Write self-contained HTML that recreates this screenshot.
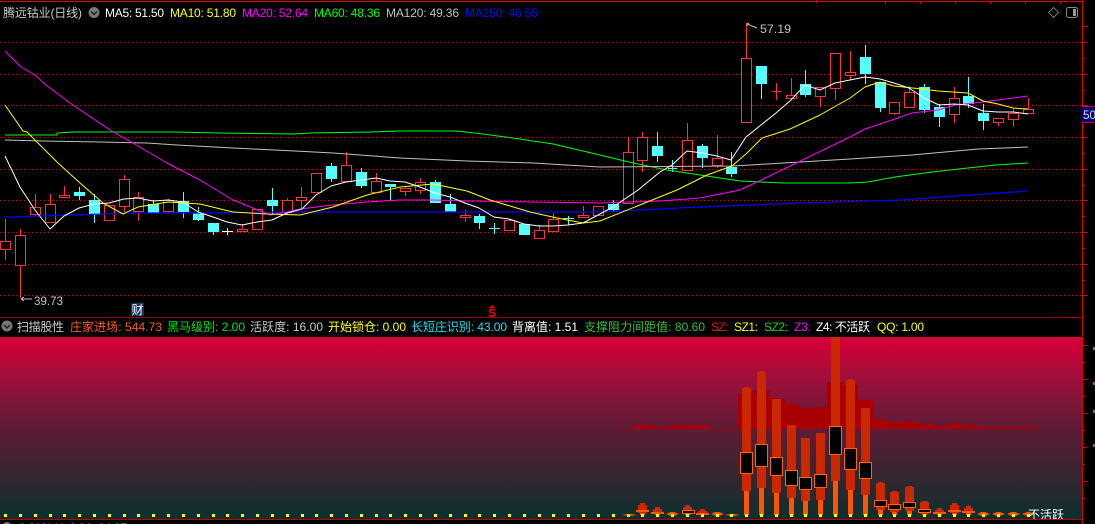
<!DOCTYPE html>
<html><head><meta charset="utf-8"><style>
html,body{margin:0;padding:0;background:#000;width:1095px;height:524px;overflow:hidden}
svg{display:block}
text{font-family:"Liberation Sans","WenQuanYi Zen Hei","Noto Sans CJK SC",sans-serif;font-size:12px}
</style></head><body>
<svg width="1095" height="524" viewBox="0 0 1095 524" xmlns="http://www.w3.org/2000/svg">
<defs><linearGradient id="g" x1="0" y1="0" x2="0" y2="1">
<stop offset="0" stop-color="#d90038"/><stop offset=".25" stop-color="#99103a"/><stop offset=".5" stop-color="#5e1c36"/><stop offset=".75" stop-color="#38252f"/><stop offset="1" stop-color="#0a3030"/></linearGradient></defs>
<rect width="1095" height="524" fill="#000"/>
<!-- grid -->
<path shape-rendering="crispEdges" d="M0 42.5H1082M0 74.5H1082M0 105.5H1082M0 137.5H1082M0 169.5H1082M0 200.5H1082M0 232.5H1082M0 264.5H1082M0 295.5H1082" stroke="#d80000" stroke-dasharray="1 3" fill="none"/>
<!-- frame -->
<path shape-rendering="crispEdges" d="M0 1.5H1082M1082.5 0V524" stroke="#d80000" fill="none"/>
<path shape-rendering="crispEdges" d="M17.5 0v2M816.5 0v3M885.5 2v2M920.5 2v2M955.5 2v2M990.5 2v2M1025.5 2v2M1060.5 2v2" stroke="#d80000" fill="none"/>
<path shape-rendering="crispEdges" d="M1082 26.5h6M1082 42.5h6M1082 58.5h3M1082 74.5h6M1082 90.5h3M1082 105.5h6M1082 137.5h6M1082 153.5h3M1082 169.5h6M1082 185.5h3M1082 200.5h6M1082 216.5h3M1082 232.5h6M1082 248.5h3M1082 264.5h6M1082 280.5h3M1082 295.5h6M1082 345.5h5M1082 362.5h3M1082 379.5h5M1082 396.5h3M1082 413.5h5M1082 430.5h3M1082 447.5h5M1082 464.5h3M1082 481.5h5M1082 498.5h3" stroke="#d80000" fill="none"/>
<path shape-rendering="crispEdges" d="M0 317.5H1082" stroke="#a00000" fill="none"/>
<!-- red wicks -->
<path shape-rendering="crispEdges" stroke="#ff3434" fill="none" d="M5.5 219V260M20.5 229V298M35.5 194V216M50.5 194V222M64.5 186V198M124.5 175V212M138.5 192V221M168.5 199V213M242.5 224V231M287.5 198V214M301.5 187V208M346.5 152V181M376.5 173V192M405.5 187V196M420.5 178V194M465.5 210V222M509.5 219V231M539.5 225V239M553.5 213V231M583.5 206V218M628.5 137V203M642.5 132V172M687.5 123V171M717.5 135V168M746.5 23V122M776.5 83V100M791.5 78V98M820.5 87V107M835.5 53V100M850.5 51V80M894.5 102V115M909.5 86V107M954.5 87V123M998.5 118V126M1013.5 108V127M1028.5 98V113"/>
<!-- red boxes -->
<path shape-rendering="crispEdges" stroke="#ff3434" fill="#000" d="M.5 241.5h10v8h-10zM15.5 235.5h10v30h-10zM30.5 207.5h10v7h-10zM45.5 204.5h10v18h-10zM59.5 195.5h10v2h-10zM104.5 205.5h10v15h-10zM119.5 179.5h10v27h-10zM133.5 197.5h10v14h-10zM163.5 200.5h10v11h-10zM237.5 229.5h10v2h-10zM252.5 209.5h10v20h-10zM282.5 200.5h10v12h-10zM296.5 197.5h10v3h-10zM311.5 173.5h10v19h-10zM341.5 165.5h10v16h-10zM371.5 181.5h10v11h-10zM400.5 188.5h10v3h-10zM415.5 182.5h10v8h-10zM460.5 215.5h10v2h-10zM504.5 220.5h10v10h-10zM534.5 230.5h10v8h-10zM548.5 219.5h10v12h-10zM578.5 215.5h10v2h-10zM593.5 206.5h10v9h-10zM623.5 152.5h10v51h-10zM637.5 137.5h10v23h-10zM682.5 140.5h10v30h-10zM712.5 158.5h10v7h-10zM741.5 58.5h10v64h-10zM771.5 91.5h10M786.5 95.5h10v3h-10zM815.5 87.5h10v9h-10zM830.5 53.5h10v35h-10zM845.5 72.5h10v3h-10zM889.5 102.5h10v11h-10zM904.5 92.5h10v15h-10zM949.5 98.5h10v16h-10zM993.5 118.5h10v4h-10zM1008.5 113.5h10v6h-10zM1023.5 109.5h10v4h-10z"/>
<!-- cyan wicks -->
<path shape-rendering="crispEdges" stroke="#54ffff" fill="none" d="M79.5 187V200M94.5 194V223M153.5 200V213M183.5 192V218M198.5 207V221M213.5 223V235M272.5 188V215M331.5 163V182M361.5 168V188M390.5 184V200M435.5 180V203M450.5 194V212M479.5 214V229M494.5 223V234M489 228.5h11M568.5 216V225M563 218.5h11M613.5 200V212M657.5 132V162M672.5 160V172M668 168.5h9M702.5 144V168M731.5 152V177M761.5 84V99M805.5 70V97M865.5 45V84M880.5 82V112M924.5 84V113M939.5 104V127M968.5 77V108M983.5 104V130"/>
<!-- cyan boxes -->
<path shape-rendering="crispEdges" fill="#54ffff" d="M74 192h11v4h-11zM89 200h11v15h-11zM148 204h11v9h-11zM178 201h11v11h-11zM193 213h11v7h-11zM208 223h11v9h-11zM267 200h11v6h-11zM326 166h11v13h-11zM356 172h11v14h-11zM385 184h11v3h-11zM430 182h11v21h-11zM445 204h11v8h-11zM474 216h11v7h-11zM519 224h11v11h-11zM608 204h11v6h-11zM652 146h11v10h-11zM697 146h11v12h-11zM726 167h11v7h-11zM756 66h11v18h-11zM800 84h11v11h-11zM860 57h11v17h-11zM875 82h11v26h-11zM919 87h11v23h-11zM934 107h11v10h-11zM963 96h11v8h-11zM978 113h11v8h-11z"/>
<path shape-rendering="crispEdges" stroke="#fff" fill="none" d="M222 231.5h11M227.5 228v7"/>
<!-- MAs -->
<g fill="none" stroke-linejoin="round">
<polyline stroke="#0000ff" stroke-width="1.2" points="5,217 13,217 40,216 73,215 133,213 200,213 300,212 600,212 640,210 700,207 800,203 900,200 1028,191"/>
<polyline stroke="#00ff00" points="5,135 57,135 57,133 73,132 133,132 177,132 220,133 295,134 310,133 370,132 400,131 457,131 483,134 513,138 553,144 600,155 633,163 667,170 700,175 740,181 783,183 850,183 868,182 895,177 932,172 968,168 995,165 1028,163"/>
<polyline stroke="#c0c0c0" points="5,140 43,141 100,142 147,143 177,145 233,148 295,151 333,153 400,158 467,161 533,163 600,167 733,166 767,164 850,159 912,155 978,149 1028,147"/>
<polyline stroke="#ff00ff" points="5,51 21,67 35,75 46,85 70,103 110,130 133,143 167,163 200,180 233,200 253,208 270,215 287,212 300,209 333,205 367,202 400,200 433,200 467,201 600,203 660,201 700,198 740,190 757,182 850,137 865,129 895,119 912,113 938,110 955,105 983,102 1028,96"/>
<polyline stroke="#ffff00" points="5,105 23,131 27,132 58,163 80,183 103,203 123,214 138,207 168,202 200,204 233,212 267,214 300,215 333,207 367,195 400,187 433,184 467,191 490,200 530,212 557,218 583,223 600,221 677,190 707,175 732,166 747,153 762,138 790,129 820,115 850,98 865,87 880,82 894,86 922,89 938,91 968,93 983,101 998,104 1013,108 1028,109"/>
<polyline stroke="#fff" points="5,156 20,187 35,210 50,229 64,216 79,208 94,204 109,203 124,199 138,198 153,201 168,200 183,202 198,212 213,217 227,222 242,225 257,222 272,220 287,213 302,209 316,195 331,186 346,182 361,180 376,178 390,181 405,182 420,187 435,193 450,197 465,203 479,208 494,217 509,219 524,224 539,226 553,226 568,225 583,223 598,215 613,207 638,190 660,172 672,165 687,151 702,153 717,156 731,160 746,137 761,125 776,113 791,100 805,85 820,90 835,83 850,80 865,77 880,79 894,83 909,88 924,98 939,105 954,104 968,105 983,111 998,112 1013,112 1028,114"/>
</g>
<!-- price labels -->
<path d="M21 299h11M21 299l3-2M21 299l3 2" stroke="#c0c0c0" fill="none"/>
<text x="34" y="305" fill="#c0c0c0" textLength="29" lengthAdjust="spacingAndGlyphs">39.73</text>
<path d="M747 24l10 4M747 24l2-1M747 24v2" stroke="#c0c0c0" fill="none"/>
<text x="760" y="33" fill="#c0c0c0" textLength="31" lengthAdjust="spacingAndGlyphs">57.19</text>
<!-- markers -->
<rect x="131" y="303" width="13" height="13" fill="#10365e"/>
<text x="131.500" y="314" fill="#fff" textLength="12" lengthAdjust="spacingAndGlyphs">财</text>
<path d="M492 305l3 3h-6z" fill="#f00"/>
<text x="488" y="317" fill="#f00" font-weight="bold" textLength="8" lengthAdjust="spacingAndGlyphs">S</text>
<!-- top right icons -->
<path d="M1053.500 7.500l5 5-5 5-5-5z" fill="none" stroke="#777"/>
<rect x="1066.500" y="7.500" width="11" height="10" rx="2" fill="none" stroke="#888"/>
<rect x="1073" y="9" width="3" height="7" fill="#999"/>
<rect x="1082" y="107" width="13" height="15" fill="#000080"/>
<path shape-rendering="crispEdges" d="M1082 106.500h13M1082 122.500h13" stroke="#e00000"/>
<text x="1083" y="119" fill="#dcdcdc" textLength="13" lengthAdjust="spacingAndGlyphs">50</text>
<!-- header -->
<text x="3" y="17" fill="#c8c8c8" textLength="79" lengthAdjust="spacing">腾远钴业(日线)</text>
<circle cx="94" cy="12.500" r="5.500" fill="#777"/>
<path d="M91 11.500l3 3 3-3" stroke="#222" stroke-width="1.500" fill="none"/>
<text x="105" y="17" fill="#fff" textLength="59" lengthAdjust="spacing">MA5: 51.50</text>
<text x="170" y="17" fill="#ff0" textLength="66" lengthAdjust="spacing">MA10: 51.80</text>
<text x="242" y="17" fill="#f0f" textLength="66" lengthAdjust="spacing">MA20: 52.64</text>
<text x="314" y="17" fill="#0f0" textLength="66" lengthAdjust="spacing">MA60: 48.36</text>
<text x="386" y="17" fill="#c0c0c0" textLength="73" lengthAdjust="spacing">MA120: 49.36</text>
<text x="465" y="17" fill="#0018e8" textLength="73" lengthAdjust="spacing">MA250: 46.55</text>
<!-- sub header -->
<circle cx="7" cy="326" r="5.500" fill="#777"/>
<path d="M4 325l3 3 3-3" stroke="#222" stroke-width="1.500" fill="none"/>
<text x="17" y="331" fill="#c8c8c8" textLength="47">扫描股性</text>
<text x="70" y="331" fill="#ff5a1e" textLength="92" lengthAdjust="spacing">庄家进场: 544.73</text>
<text x="167" y="331" fill="#00e800" textLength="78" lengthAdjust="spacing">黑马级别: 2.00</text>
<text x="250" y="331" fill="#c8c8c8" textLength="73" lengthAdjust="spacing">活跃度: 16.00</text>
<text x="328" y="331" fill="#ff0" textLength="78" lengthAdjust="spacing">开始锁仓: 0.00</text>
<text x="411" y="331" fill="#20e0f0" textLength="96" lengthAdjust="spacing">长短庄识别: 43.00</text>
<text x="512" y="331" fill="#fff" textLength="66" lengthAdjust="spacing">背离值: 1.51</text>
<text x="584" y="331" fill="#38c038" textLength="121" lengthAdjust="spacing">支撑阻力间距值: 80.60</text>
<text x="711" y="331" fill="#f01010" textLength="17" lengthAdjust="spacing">SZ:</text>
<text x="734" y="331" fill="#ff0" textLength="24" lengthAdjust="spacing">SZ1:</text>
<text x="764" y="331" fill="#20d020" textLength="24" lengthAdjust="spacing">SZ2:</text>
<text x="794" y="331" fill="#f010f0" textLength="17" lengthAdjust="spacing">Z3:</text>
<text x="816" y="331" fill="#fff" textLength="54" lengthAdjust="spacing">Z4: 不活跃</text>
<text x="877" y="331" fill="#ff0" textLength="47" lengthAdjust="spacing">QQ: 1.00</text>
<!-- sub panel -->
<rect x="0" y="337" width="1082" height="182" fill="url(#g)"/>
<path shape-rendering="crispEdges" fill="#a80000" d="M620 429V428H633V425H653V427H669V425H710V428H738V394H753V391H770V398H785V404H800V408H817V407H827V382H843V385H858V393H858V400H873V419H888V422H903V421H918V424H933V426H947V424H962V425H977V427H1037V429Z"/>
<!-- bars -->
<g shape-rendering="crispEdges">
<path fill="#ff5500" d="M744 491h5v24h-5zM759 488h5v27h-5zM774 493h5v22h-5zM789 498h5v17h-5zM803 501h5v14h-5zM818 500h5v15h-5zM833 481h5v34h-5zM848 490h5v25h-5zM863 495h5v20h-5zM878 510h5v5h-5zM892 512h5v3h-5zM907 511h5v4h-5zM922 512h5v3h-5zM937 513h5v2h-5zM952 511h5v4h-5zM966 512h5v3h-5zM640 511h5v4h-5zM655 513h5v2h-5zM685 512h5v3h-5zM700 513h5v2h-5z"/>
<path fill="#cc2800" d="M742 388h9v103h-9zM744 387h5v1h-5zM757 372h9v116h-9zM759 371h5v1h-5zM772 399h9v94h-9zM787 425h9v73h-9zM801 438h9v63h-9zM816 433h9v67h-9zM831 337h9v144h-9zM846 380h9v110h-9zM848 379h5v1h-5zM861 408h9v87h-9zM876 483h9v27h-9zM878 482h5v1h-5zM890 492h9v20h-9zM892 491h5v1h-5zM905 487h9v24h-9zM907 486h5v1h-5zM920 502h9v12h-9zM922 501h5v1h-5zM935 510h9v4h-9zM937 508h5v2h-5zM950 505h9v8h-9zM952 503h5v2h-5zM964 508h9v5h-9zM966 506h5v2h-5zM980 512h6v2h-6zM995 513h6v1h-6zM1010 512h6v2h-6zM1025 513h6v1h-6zM638 505h9v8h-9zM640 503h5v2h-5zM653 509h9v4h-9zM655 507h5v2h-5zM669 512h6v2h-6zM683 507h9v6h-9zM685 505h5v2h-5zM698 511h9v3h-9zM700 509h5v2h-5zM713 512h8v2h-8z"/>
<path fill="#000" stroke="#ff6400" d="M740.500 452.500h12v21h-12zM755.500 444.500h12v22h-12zM770.500 457.500h12v18h-12zM785.500 470.500h12v15h-12zM799.500 477.500h12v12h-12zM814.500 474.500h12v13h-12zM829.500 426.500h12v28h-12zM844.500 448.500h12v21h-12zM859.500 462.500h12v16h-12zM874.500 500.500h12v6h-12zM888.500 504.500h12v5h-12zM903.500 502.500h12v5h-12zM918.500 509.500h12v3h-12zM682.500 510.500h12v3h-12z"/>
<path fill="#ff5500" d="M933 512h13v2h-13zM948 510h13v2h-13zM962 511h13v2h-13zM636 510h13v2h-13zM651 512h13v2h-13zM696 513h13v2h-13z"/>
</g>
<path fill="#ff5500" d="M622 515l6-1h3l6 1-6 1h-3zM666 514l5-2h3l5 2-5 2h-3zM711 514l5-2h3l5 2-5 2h-3zM725 515l6-1h3l6 1-6 1h-3zM977 514l5-2h3l5 2-5 2h-3zM992 514l5-2h3l5 2-5 2h-3zM1007 514l5-2h3l5 2-5 2h-3zM1022 514l5-2h3l5 2-5 2h-3z"/>
<path shape-rendering="crispEdges" fill="#ff0" d="M4 514h3v3h-3zM19 514h3v3h-3zM34 514h3v3h-3zM49 514h3v3h-3zM63 514h3v3h-3zM78 514h3v3h-3zM93 514h3v3h-3zM108 514h3v3h-3zM123 514h3v3h-3zM137 514h3v3h-3zM152 514h3v3h-3zM167 514h3v3h-3zM182 514h3v3h-3zM197 514h3v3h-3zM212 514h3v3h-3zM226 514h3v3h-3zM241 514h3v3h-3zM256 514h3v3h-3zM271 514h3v3h-3zM286 514h3v3h-3zM301 514h3v3h-3zM315 514h3v3h-3zM330 514h3v3h-3zM345 514h3v3h-3zM360 514h3v3h-3zM375 514h3v3h-3zM389 514h3v3h-3zM404 514h3v3h-3zM419 514h3v3h-3zM434 514h3v3h-3zM449 514h3v3h-3zM464 514h3v3h-3zM478 514h3v3h-3zM493 514h3v3h-3zM508 514h3v3h-3zM523 514h3v3h-3zM538 514h3v3h-3zM552 514h3v3h-3zM567 514h3v3h-3zM582 514h3v3h-3zM597 514h3v3h-3zM612 514h3v3h-3zM627 514h3v3h-3zM641 514h3v3h-3zM656 514h3v3h-3zM671 514h3v3h-3zM686 514h3v3h-3zM701 514h3v3h-3zM716 514h3v3h-3zM730 514h3v3h-3zM745 514h3v3h-3zM760 514h3v3h-3zM775 514h3v3h-3zM790 514h3v3h-3zM804 514h3v3h-3zM819 514h3v3h-3zM834 514h3v3h-3zM849 514h3v3h-3zM864 514h3v3h-3zM879 514h3v3h-3zM893 514h3v3h-3zM908 514h3v3h-3zM923 514h3v3h-3zM938 514h3v3h-3zM953 514h3v3h-3zM967 514h3v3h-3zM982 514h3v3h-3zM997 514h3v3h-3zM1012 514h3v3h-3zM1027 514h3v3h-3z"/>
<svg x="0" y="337" width="1082" height="182"><text x="1028" y="182" fill="#fff" textLength="36" lengthAdjust="spacing">不活跃</text></svg>
<path shape-rendering="crispEdges" d="M0 519.500H1082" stroke="#c00000" fill="none"/>
<path shape-rendering="crispEdges" fill="#e04060" d="M1093 347h2v3h-2zM1093 382h2v3h-2zM1093 410h2v3h-2zM1093 444h2v3h-2z"/>
<!-- cut-off footer -->
<circle cx="7" cy="527" r="5" fill="#777"/>
<text x="19" y="532" fill="#c8c8c8" textLength="108" lengthAdjust="spacing">0.01% H: 0.01: 04.87</text>
</svg>
</body></html>
